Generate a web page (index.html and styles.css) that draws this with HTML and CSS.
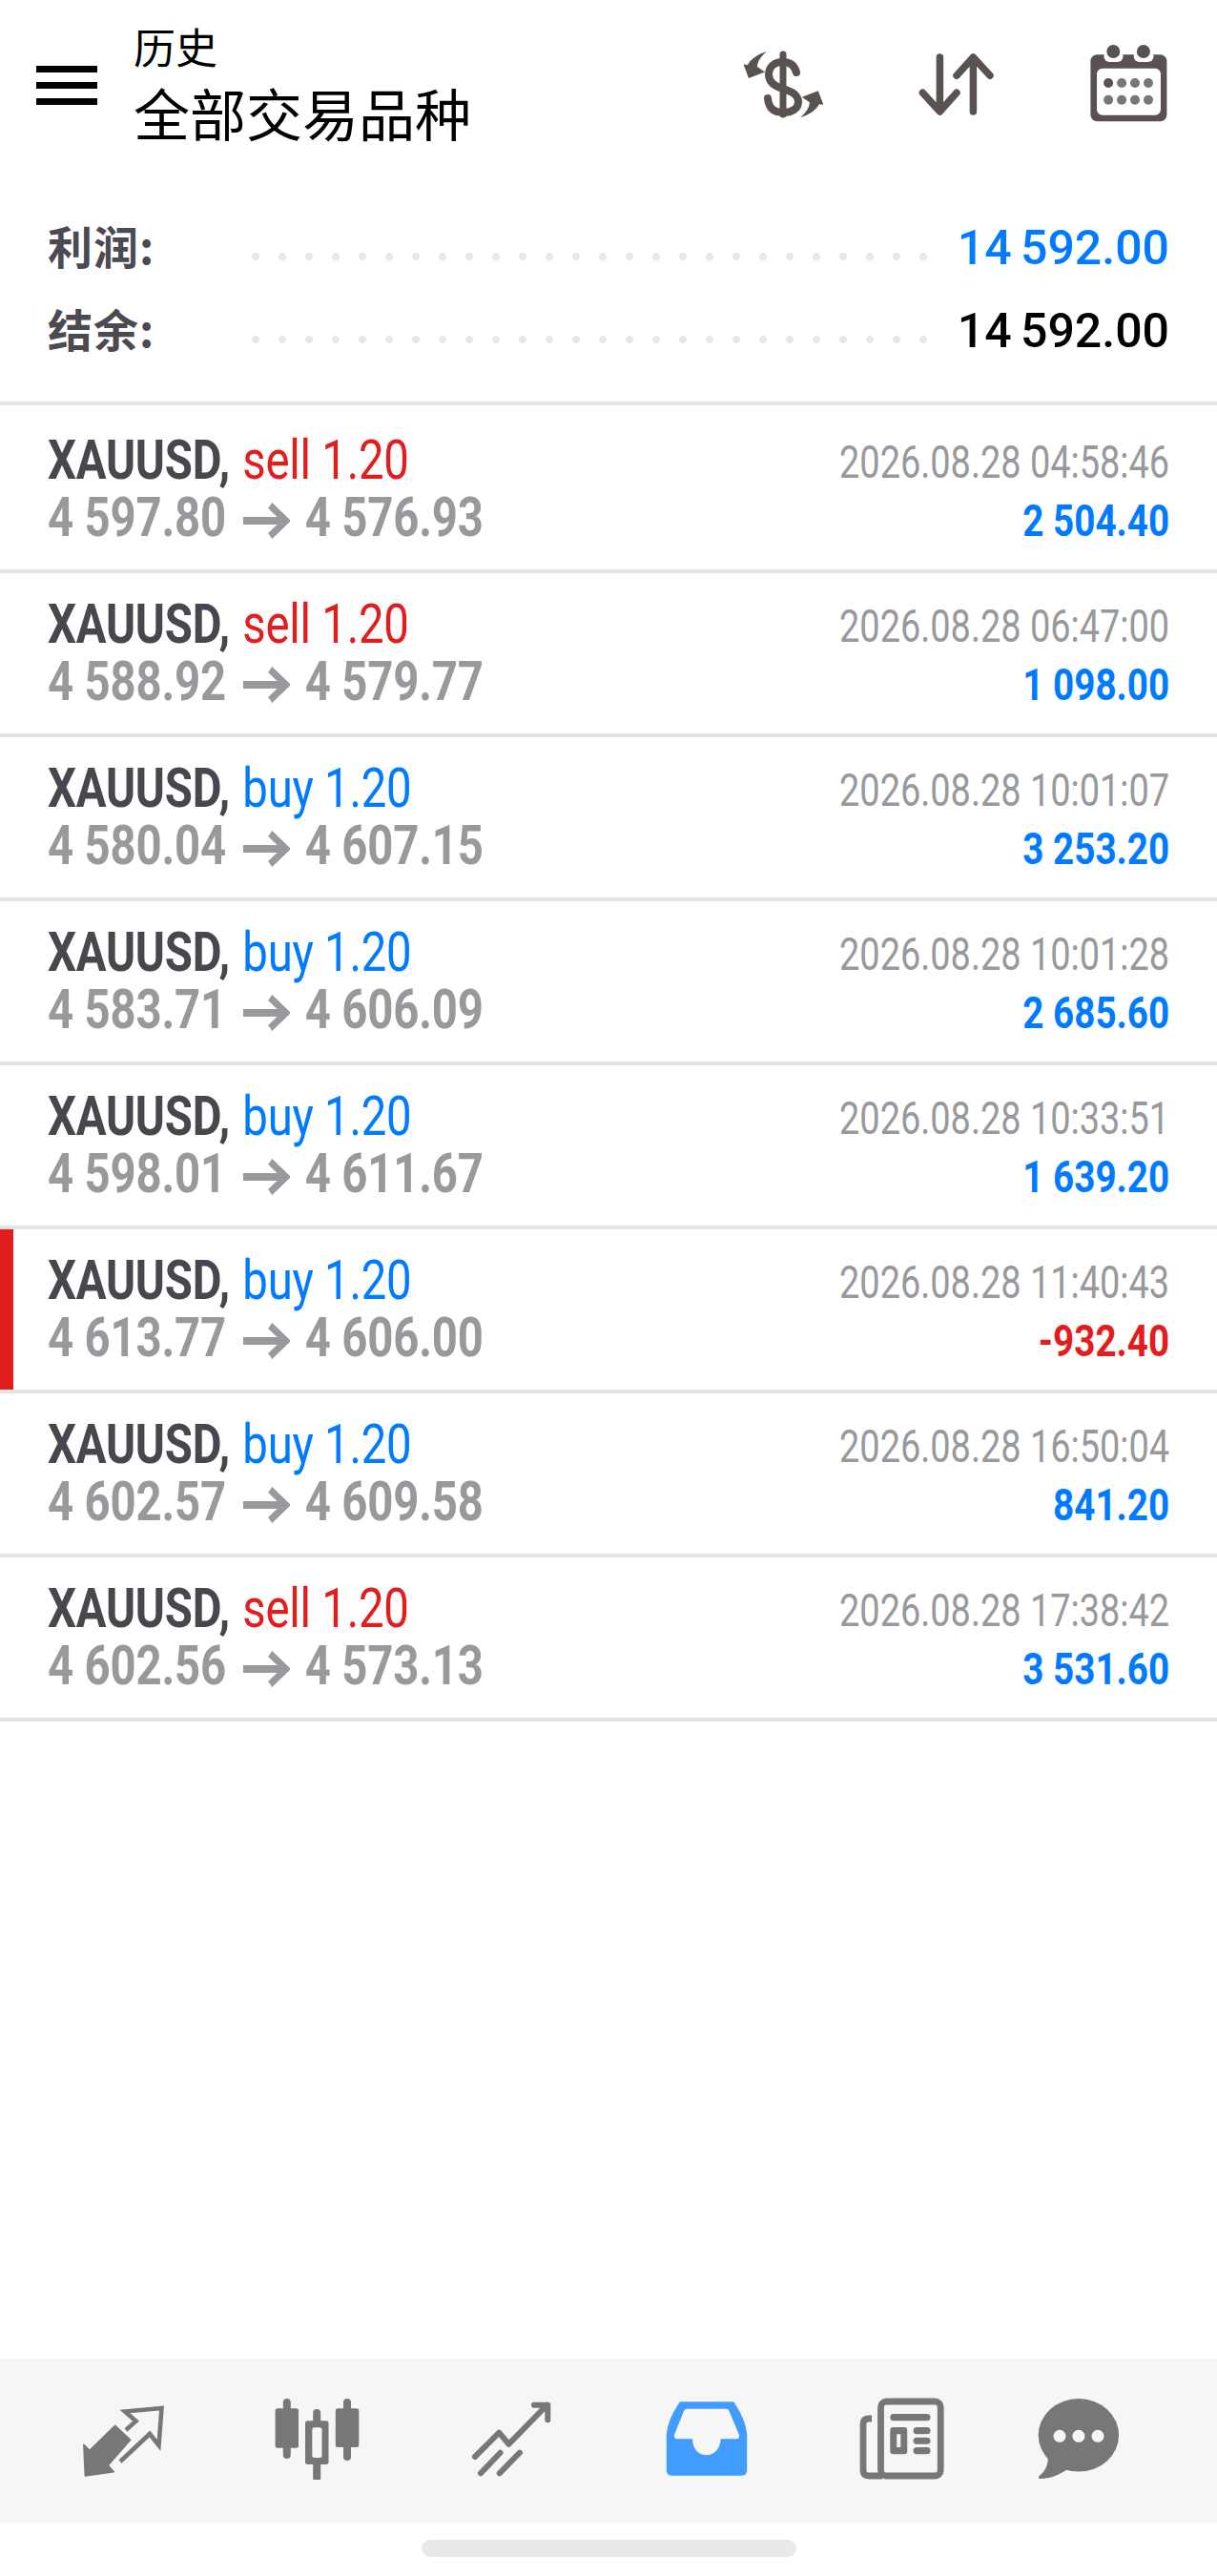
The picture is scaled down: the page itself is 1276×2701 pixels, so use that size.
FILE: index.html
```html
<!DOCTYPE html>
<html lang="zh-CN">
<head>
<meta charset="UTF-8">
<meta name="viewport" content="width=device-width, initial-scale=1.0">
<title>历史</title>
<link rel="stylesheet" href="styles.css">
</head>
<body>
<header class="topbar">
    <div class="burger"><span></span><span></span><span></span></div>
    <div class="title">
        <div class="title-small">历史</div>
        <div class="title-main">全部交易品种</div>
    </div>
    <div class="top-icons">
        <svg width="95" height="90" viewBox="0 -6 95 90">
            <g fill="#5a5250">
                <path d="M29 4C19 7 12 12 9 18L4.500 17.500L10 32L27 25.500L19 20C19 14 24 8 29 4Z"/>
                <path transform="rotate(180 46.400 38.650)" d="M29 4C19 7 12 12 9 18L4.500 17.500L10 32L27 25.500L19 20C19 14 24 8 29 4Z"/>
            </g>
            <g fill="none" stroke="#5a5250" stroke-linecap="round">
                <path stroke-width="7" d="M46 7V70"/>
                <path stroke-width="8" d="M60 26C58 18 53 15 46 15C37 15 31 20 31 28C31 37 39 41 46 43C55 46 62 49 62 57C62 64 55 68 46 68C37 68 31 64 30 53"/>
            </g>
        </svg>
        <svg width="90" height="90" viewBox="0 -11 90 90">
            <g fill="none" stroke="#5a5250" stroke-width="7.500" stroke-linecap="round" stroke-linejoin="round">
                <path d="M25.400 5V61M7.400 42.300L25.400 62L43 42.300"/>
                <path d="M60.400 62V6M43 24.300L60.400 5L78 24.300"/>
            </g>
        </svg>
        <svg width="90" height="90" viewBox="0 -1 90 90">
            <rect x="3.400" y="12.300" width="80" height="70" rx="7" fill="#5a5250"/>
            <rect x="10" y="26.700" width="67" height="49" rx="6" fill="#fff"/>
            <rect x="17.400" y="8" width="20.200" height="12" rx="6" fill="#fff"/>
            <rect x="48.600" y="8" width="21" height="12" rx="6" fill="#fff"/>
            <circle cx="27.300" cy="9" r="7" fill="#5a5250"/>
            <circle cx="58.900" cy="9" r="7" fill="#5a5250"/>
            <g fill="#777">
                <circle cx="22.100" cy="42" r="5" fill="#5a5250"/>
                <circle cx="36.100" cy="42" r="5"/>
                <circle cx="50" cy="42" r="5"/>
                <circle cx="64" cy="42" r="5"/>
                <circle cx="22.100" cy="59.700" r="5"/>
                <circle cx="36.100" cy="59.700" r="5"/>
                <circle cx="50" cy="59.700" r="5"/>
                <circle cx="64" cy="59.700" r="5"/>
            </g>
        </svg>
    </div>
</header>

<section class="summary">
    <div class="sum-row">
        <div class="sum-label">利润:</div>
        <div class="sum-dots"></div>
        <div class="sum-value blue">14 592.00</div>
    </div>
    <div class="sum-row">
        <div class="sum-label">结余:</div>
        <div class="sum-dots"></div>
        <div class="sum-value">14 592.00</div>
    </div>
</section>

<main class="deals">
    <div class="deal">
        <div class="deal-left">
            <div class="line-one"><b>XAUUSD,</b> <span class="red">sell 1.20</span></div>
            <div class="line-two">4 597.80<svg class="arrow" viewBox="0 0 59 40"><path d="M0 20H54M34 4L54 20L34 36"/></svg>4 576.93</div>
        </div>
        <div class="deal-right">
            <div class="deal-time">2026.08.28 04:58:46</div>
            <div class="deal-profit blue">2 504.40</div>
        </div>
    </div>
    <div class="deal">
        <div class="deal-left">
            <div class="line-one"><b>XAUUSD,</b> <span class="red">sell 1.20</span></div>
            <div class="line-two">4 588.92<svg class="arrow" viewBox="0 0 59 40"><path d="M0 20H54M34 4L54 20L34 36"/></svg>4 579.77</div>
        </div>
        <div class="deal-right">
            <div class="deal-time">2026.08.28 06:47:00</div>
            <div class="deal-profit blue">1 098.00</div>
        </div>
    </div>
    <div class="deal">
        <div class="deal-left">
            <div class="line-one"><b>XAUUSD,</b> <span class="blue">buy 1.20</span></div>
            <div class="line-two">4 580.04<svg class="arrow" viewBox="0 0 59 40"><path d="M0 20H54M34 4L54 20L34 36"/></svg>4 607.15</div>
        </div>
        <div class="deal-right">
            <div class="deal-time">2026.08.28 10:01:07</div>
            <div class="deal-profit blue">3 253.20</div>
        </div>
    </div>
    <div class="deal">
        <div class="deal-left">
            <div class="line-one"><b>XAUUSD,</b> <span class="blue">buy 1.20</span></div>
            <div class="line-two">4 583.71<svg class="arrow" viewBox="0 0 59 40"><path d="M0 20H54M34 4L54 20L34 36"/></svg>4 606.09</div>
        </div>
        <div class="deal-right">
            <div class="deal-time">2026.08.28 10:01:28</div>
            <div class="deal-profit blue">2 685.60</div>
        </div>
    </div>
    <div class="deal">
        <div class="deal-left">
            <div class="line-one"><b>XAUUSD,</b> <span class="blue">buy 1.20</span></div>
            <div class="line-two">4 598.01<svg class="arrow" viewBox="0 0 59 40"><path d="M0 20H54M34 4L54 20L34 36"/></svg>4 611.67</div>
        </div>
        <div class="deal-right">
            <div class="deal-time">2026.08.28 10:33:51</div>
            <div class="deal-profit blue">1 639.20</div>
        </div>
    </div>
    <div class="deal selected">
        <div class="deal-left">
            <div class="line-one"><b>XAUUSD,</b> <span class="blue">buy 1.20</span></div>
            <div class="line-two">4 613.77<svg class="arrow" viewBox="0 0 59 40"><path d="M0 20H54M34 4L54 20L34 36"/></svg>4 606.00</div>
        </div>
        <div class="deal-right">
            <div class="deal-time">2026.08.28 11:40:43</div>
            <div class="deal-profit red">-932.40</div>
        </div>
    </div>
    <div class="deal">
        <div class="deal-left">
            <div class="line-one"><b>XAUUSD,</b> <span class="blue">buy 1.20</span></div>
            <div class="line-two">4 602.57<svg class="arrow" viewBox="0 0 59 40"><path d="M0 20H54M34 4L54 20L34 36"/></svg>4 609.58</div>
        </div>
        <div class="deal-right">
            <div class="deal-time">2026.08.28 16:50:04</div>
            <div class="deal-profit blue">841.20</div>
        </div>
    </div>
    <div class="deal">
        <div class="deal-left">
            <div class="line-one"><b>XAUUSD,</b> <span class="red">sell 1.20</span></div>
            <div class="line-two">4 602.56<svg class="arrow" viewBox="0 0 59 40"><path d="M0 20H54M34 4L54 20L34 36"/></svg>4 573.13</div>
        </div>
        <div class="deal-right">
            <div class="deal-time">2026.08.28 17:38:42</div>
            <div class="deal-profit blue">3 531.60</div>
        </div>
    </div>
</main>

<nav class="tabbar">
    <svg width="110" height="90" viewBox="0 -10 110 90">
        <path fill="#777" stroke="#777" stroke-width="1.500" stroke-linejoin="round" d="M2.800 43.300L9 49.300L35.700 23.300L51.700 38.300L28.300 65L34.300 71.700L4.300 76Z"/>
        <path fill="none" stroke="#777" stroke-width="4.600" d="M41 61L72 32L81.500 44L84.500 5L46 8.500L57.500 18.500L47 28"/>
    </svg>
    <svg width="110" height="90" viewBox="0 0 110 90">
        <g stroke="#777" stroke-width="8" stroke-linecap="round">
            <path d="M15.800 9V64M79 9V66M47.200 20V88"/>
        </g>
        <g fill="#777">
            <rect x="3.600" y="15.300" width="24.400" height="41.400" rx="2.500"/>
            <rect x="66.800" y="15.300" width="24.500" height="40.700" rx="2.500"/>
            <rect x="35" y="28.300" width="24.500" height="45.700" rx="2.500"/>
        </g>
        <rect x="42.300" y="35.300" width="10.200" height="31.700" rx="2.500" fill="#f6f6f6"/>
    </svg>
    <svg width="110" height="90" viewBox="-5 0 110 90">
        <g fill="none" stroke="#777" stroke-width="6" stroke-linecap="round" stroke-linejoin="round">
            <path d="M7.900 66L33.300 40.700L43.500 52.700L83.500 11.700M70 11.700H84.300V27.300"/>
            <path d="M34.500 61.700L14 83.300M54.900 61.700L33.700 83.300"/>
        </g>
    </svg>
    <svg width="110" height="90" viewBox="-10 -5 110 90">
        <path fill="#409cff" d="M18 3.300H74C81 13 88.200 27 88.200 40V75Q88.200 80.700 83 80.700H9Q3.800 80.700 3.800 75V40C3.800 27 11 13 18 3.300Z"/>
        <path fill="#f6f6f6" d="M25 10.700H66Q68.700 10.700 69.500 13L80 38.300Q80.500 42.300 77 42.300H60.600C60.600 52 54 59.300 45.600 59.300C37 59.300 31 52 31 42.300H15Q11.500 42.300 12 38L22 13Q23 10.700 25 10.700Z"/>
    </svg>
    <svg width="110" height="90" viewBox="-10 0 110 90">
        <g fill="none" stroke="#777" stroke-width="6.800">
            <rect x="28.500" y="8" width="62.700" height="78" rx="6"/>
            <path d="M19 26H15Q10 26 10 32V80Q10 86 16 86H30"/>
        </g>
        <g fill="#777">
            <rect x="38.300" y="21" width="42.200" height="7.300" rx="3.600"/>
            <rect x="38.300" y="35" width="17.900" height="28.300" rx="3"/>
            <rect x="62.600" y="35" width="17.900" height="7.300" rx="3.600"/>
            <rect x="62.600" y="45.700" width="17.900" height="7" rx="3.500"/>
            <rect x="62.600" y="56" width="17.900" height="7.300" rx="3.600"/>
        </g>
        <rect x="45.200" y="42.300" width="4.100" height="13.700" fill="#f6f6f6"/>
    </svg>
    <svg width="110" height="90" viewBox="0 0 110 90">
        <ellipse cx="45.900" cy="43.300" rx="42.200" ry="38.300" fill="#777"/>
        <path fill="#777" d="M13.400 64C15 74 11 81 4 86.700Q3.500 89 5.300 89C16 89 26 85 34 79Z"/>
        <g fill="#f6f6f6">
            <ellipse cx="26" cy="44.300" rx="6.500" ry="6.500"/>
            <ellipse cx="45.900" cy="44.300" rx="6.500" ry="6.500"/>
            <ellipse cx="66" cy="44.300" rx="6.500" ry="6.500"/>
        </g>
    </svg>
</nav>
<div class="home-area"><div class="home-pill"></div></div>
</body>
</html>
```

FILE: styles.css
```css
* {
    box-sizing: border-box;
}

body {
    margin: 0;
    min-height: 100vh;
    display: flex;
    flex-direction: column;
    background-color: #fff;
    font-family: Roboto, "Noto Sans CJK SC", sans-serif;
}

.blue {
    color: #007aff;
}

.red {
    color: #e21d1d;
}

/* top bar */
.topbar {
    height: 178px;
    display: flex;
    align-items: center;
    padding: 0 46px 0 38px;
}

.burger {
    width: 64px;
    display: flex;
    flex-direction: column;
    gap: 10px;
    margin-right: 38px;
}

.burger span {
    height: 7px;
    background-color: #000;
}

.title {
    padding-bottom: 3px;
    font-family: "Noto Sans CJK SC", sans-serif;
    color: #000;
}

.title-small {
    font-size: 44px;
    line-height: 60px;
}

.title-main {
    font-size: 59px;
    line-height: 80px;
}

.top-icons {
    margin-left: auto;
    display: flex;
    gap: 90px;
}

/* profit and balance */
.summary {
    padding: 38px 50px 31px 50px;
}

.sum-row {
    height: 87px;
    display: flex;
    align-items: center;
}

.sum-label {
    width: 214px;
    padding-bottom: 6px;
    font-family: "Noto Sans CJK SC", sans-serif;
    font-size: 47px;
    font-weight: 700;
    letter-spacing: 1px;
    color: #4a4a50;
}

.sum-dots {
    width: 712px;
    height: 8px;
    margin-top: 18px;
    background: radial-gradient(circle at 4px 4px, #e8e8e8 3.6px, transparent 4.2px) left top / 28px 8px repeat-x;
}

.sum-value {
    margin-left: auto;
    font-size: 50px;
    font-weight: 500;
    word-spacing: -3px;
}

/* deal list */
.deals {
    flex: 1;
    padding-top: 4px;
    border-top: 4px solid #e4e4e4;
}

.deal {
    height: 172px;
    display: flex;
    align-items: center;
    justify-content: space-between;
    padding: 0 50px;
    border-bottom: 4px solid #e4e4e4;
}

.deal.selected {
    box-shadow: inset 14px 0 0 #e21d1d;
}

.deal-left {
    transform: scaleX(.83);
    transform-origin: left center;
    font-size: 57px;
    line-height: 60px;
    white-space: nowrap;
}

.line-one b {
    letter-spacing: -.3px;
    color: #47474d;
}

.line-one span {
    margin-left: 2px;
    letter-spacing: -.3px;
}

.line-two {
    font-weight: 700;
    letter-spacing: -.2px;
    color: #98999c;
}

.arrow {
    width: 59px;
    height: 40px;
    margin: 0 19px 0 21.700px;
    vertical-align: -4px;
}

.arrow path {
    fill: none;
    stroke: #98999c;
    stroke-width: 8;
}

.deal-right {
    padding-top: 5px;
    text-align: right;
    white-space: nowrap;
}

.deal-time {
    transform: scaleX(.79);
    transform-origin: right center;
    font-size: 48px;
    line-height: 60px;
    color: #98999c;
}

.deal-profit {
    margin-top: 1px;
    transform: scaleX(.84);
    transform-origin: right center;
    font-size: 46px;
    font-weight: 700;
    line-height: 60px;
}

/* bottom tabs */
.tabbar {
    height: 172px;
    display: flex;
    gap: 90px;
    padding: 37px 0 0 85px;
    background-color: #f6f6f6;
}

.home-area {
    height: 56px;
    padding-top: 18px;
}

.home-pill {
    width: 393px;
    height: 18px;
    margin: 0 auto;
    border-radius: 9px;
    background-color: #e9e9e9;
}
```
